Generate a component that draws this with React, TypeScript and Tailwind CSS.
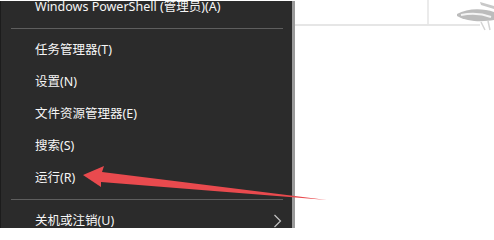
import { Fragment } from "react";

type Entry = { label: string; sub?: boolean } | "sep";

const ENTRIES: Entry[] = [
  { label: "Windows PowerShell (管理员)(A)" },
  "sep",
  { label: "任务管理器(T)" },
  { label: "设置(N)" },
  { label: "文件资源管理器(E)" },
  { label: "搜索(S)" },
  { label: "运行(R)" },
  "sep",
  { label: "关机或注销(U)", sub: true },
];

function Chevron() {
  return (
    <svg width="9" height="14" viewBox="0 0 9 14" className="shrink-0">
      <polyline points="1.5,1 7.5,7 1.5,13" fill="none" stroke="#c4c4c4" strokeWidth="1.2" />
    </svg>
  );
}

/** Win+X style context menu, cut off at top and bottom like the screenshot. */
function QuickLinkMenu() {
  return (
    <div className="mt-px h-[227px] w-[295px] shrink-0 overflow-hidden border-r-[3px] border-l border-[#1c1c1c] border-r-[#9a9a9a] bg-[#2b2b2b]">
      <div className="-mt-[10px] flex flex-col">
        {ENTRIES.map((e, i) =>
          e === "sep" ? (
            <div key={i} className="h-[11px] pt-[5px]">
              <div className="ml-[10px] mr-[9px] h-px bg-[#5e5e5e]" />
            </div>
          ) : (
            <Fragment key={i}>
              <div className="flex h-8 items-center justify-between pl-[34px] pr-[10px] text-[12.5px] text-[#f6f6f6]">
                <span>{e.label}</span>
                {e.sub && <Chevron />}
              </div>
            </Fragment>
          ),
        )}
      </div>
    </div>
  );
}

/** Faint desktop picture peeking out to the right of the menu. */
function Backdrop() {
  return (
    <div className="h-full flex-1">
      <svg width="199" height="228" viewBox="0 0 199 228">
        <line x1="0" y1="25" x2="185" y2="25" stroke="#e6e6e6" strokeWidth="2" />
        <line x1="133" y1="0" x2="133" y2="25" stroke="#e4e4e4" strokeWidth="1.5" />
        <path d="M162 14 C 172 8, 188 8, 199 12 L 199 20 C 188 22, 172 22, 162 16 Z" fill="#bcbcbc" />
        <path d="M166 15 C 176 13, 188 14, 196 17" stroke="#f4f4f4" strokeWidth="2" fill="none" />
        <path d="M185 2 L 199 6 L 199 9 L 186 5 Z" fill="#c8c8c8" />
        <path d="M186 22 L 190 30 M 193 21 L 195 30" stroke="#d4d4d4" strokeWidth="1.5" />
      </svg>
    </div>
  );
}

function RedArrow() {
  return (
    <svg
      width="494"
      height="228"
      viewBox="0 0 494 228"
      className="pointer-events-none absolute left-0 top-0"
    >
      <polygon
        points="83,175 104,166 102,172 327,200 101,182 101,187"
        fill="#e94a4e"
      />
    </svg>
  );
}

export default function App() {
  return (
    <div
      className="relative flex h-[228px] w-[494px] overflow-hidden bg-white"
      style={{ fontFamily: '"Noto Sans", "Noto Sans CJK SC", sans-serif' }}
    >
      <QuickLinkMenu />
      <Backdrop />
      <RedArrow />
    </div>
  );
}
